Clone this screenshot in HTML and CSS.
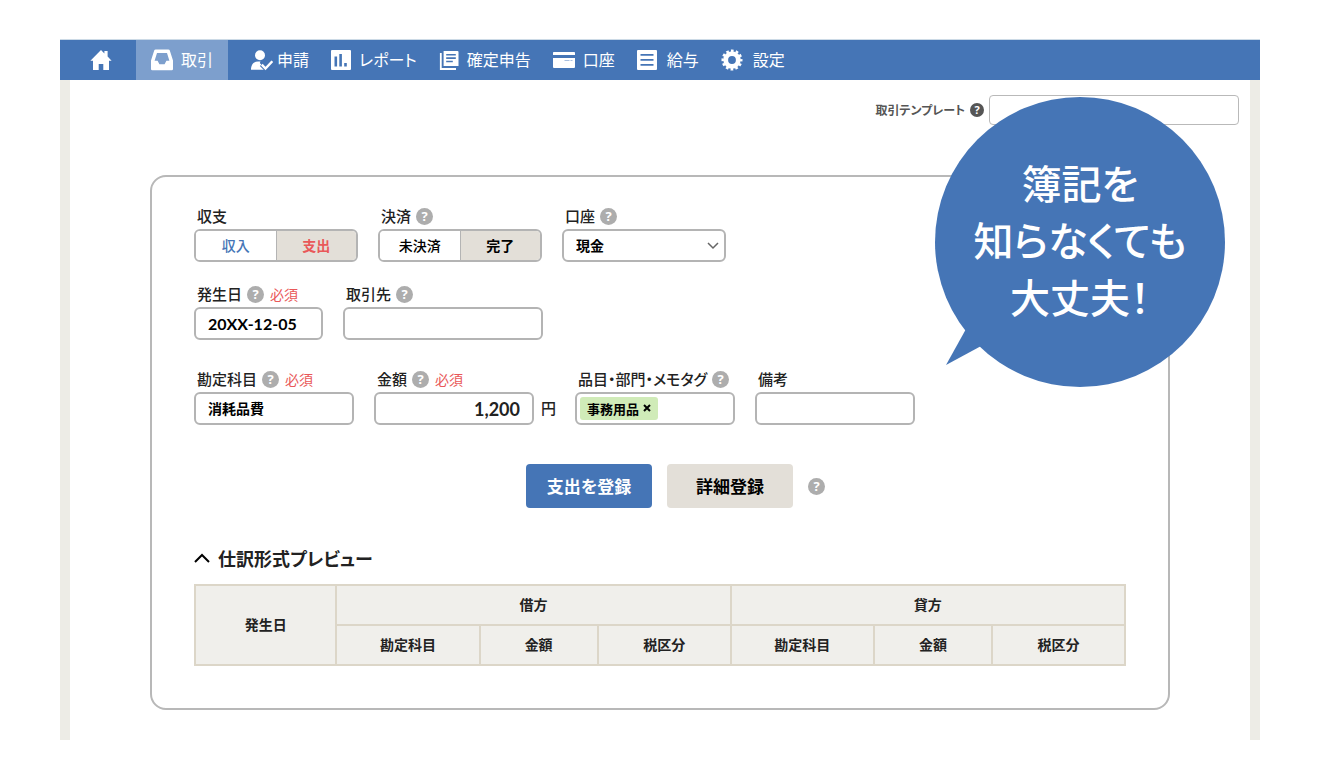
FILE: index.html
```html
<!DOCTYPE html>
<html lang="ja">
<head>
<meta charset="utf-8">
<meta name="viewport" content="width=device-width, initial-scale=1">
<title>取引の登録</title>
<link rel="stylesheet" href="styles.css">
</head>
<body>
<div class="app">
  <nav class="nav">
    <a class="nav-item nav-home" href="#" aria-label="ホーム">
      <svg class="icon" width="22" height="22" viewBox="0 0 22 22"><path d="M11 1 .4 11.700H3V21h5.700v-6h4.600v6H19v-9.300h2.600L17.600 7.500V2h-3.200v2.400z"/></svg>
    </a>
    <a class="nav-item nav-active" href="#" aria-current="page">
      <svg class="icon" width="22" height="22" viewBox="0 0 22 22"><path fill-rule="evenodd" d="M4.700.5h12.600q1.200 0 1.500 1L22 11.500V20q0 1.200-1.200 1.200H1.200Q0 21.200 0 20v-8.500l3.200-10q.3-1 1.500-1zM6 4 3.600 11.800h3l1.800 3.400h5.200l1.800-3.400h3L16 4z"/></svg>
      <span>取引</span>
    </a>
    <a class="nav-item nav-tight" href="#">
      <svg class="icon" width="22" height="22" viewBox="0 0 22 22"><circle cx="9" cy="6.200" r="5"/><path d="M0 20.800c0-5 2.500-8.300 7-8.300h2.500L8.800 14l6 6-.8.800z"/><path d="M10.500 15.500l4 4 6.700-7.200" fill="none" stroke="#4575b6" stroke-width="4.500"/><path d="M10.800 15.700l3.700 3.800 6.800-7.300" fill="none" stroke="#fff" stroke-width="2.400"/></svg>
      <span>申請</span>
    </a>
    <a class="nav-item" href="#">
      <svg class="icon" width="20" height="20" viewBox="0 0 20 20"><path fill-rule="evenodd" d="M1 0h18q1 0 1 1v18q0 1-1 1H1q-1 0-1-1V1q0-1 1-1zM3.500 6.500v10h2.600v-10zM8.300 4v12.500h2.600V4zM13.200 13v3.500h2.600V13z"/></svg>
      <span>レポート</span>
    </a>
    <a class="nav-item" href="#">
      <svg class="icon" width="20" height="20" viewBox="0 0 20 20"><path fill-rule="evenodd" d="M4.600 1H18.500q1 0 1 1v14H4.600zM7.200 4v1.600h9.600V4zM7.200 7.300v1.600h9.600V7.300zM7.200 10.700v1.600h6.600v-1.600z"/><path d="M1.800 3v16H17" fill="none" stroke="#fff" stroke-width="1.800"/></svg>
      <span>確定申告</span>
    </a>
    <a class="nav-item" href="#">
      <svg class="icon" width="22" height="20" viewBox="0 0 22 20"><path d="M.8 2h20.400q.8 0 .8.800V5H0V2.800Q0 2 .8 2zM0 8h22v9q0 1-1 1H1q-1 0-1-1z"/><path d="M11.500 10.500h8" stroke="#a8bfdf" stroke-width="1" stroke-dasharray="5 1"/></svg>
      <span>口座</span>
    </a>
    <a class="nav-item nav-wide" href="#">
      <svg class="icon" width="20" height="20" viewBox="0 0 20 20"><path fill-rule="evenodd" d="M1 0h18q1 0 1 1v18q0 1-1 1H1q-1 0-1-1V1q0-1 1-1zM3.500 4v1.800h13V4zM3.500 9v1.800h13V9zM3.500 14v1.800h13V14z"/></svg>
      <span>給与</span>
    </a>
    <a class="nav-item nav-wide" href="#">
      <svg class="icon" width="22" height="22" viewBox="0 0 22 22"><circle cx="11" cy="11" r="6.300" fill="none" stroke="#fff" stroke-width="4.800"/><circle cx="11" cy="11" r="9.300" fill="none" stroke="#fff" stroke-width="2.400" stroke-dasharray="2.700 2.169" stroke-dashoffset="1.350"/></svg>
      <span>設定</span>
    </a>
  </nav>

  <main class="main">
    <div class="template">
      <label class="template-label" for="template">取引テンプレート</label>
      <button class="help help-dark" type="button" aria-label="取引テンプレートのヘルプ">?</button>
      <input class="template-input" id="template" type="text">
    </div>

    <form class="panel">
      <div class="row">
        <div class="field field-segment">
          <div class="field-head"><span id="l-type">収支</span></div>
          <div class="segment" role="group" aria-labelledby="l-type">
            <button class="segment-item segment-income" type="button" aria-pressed="false">収入</button>
            <button class="segment-item segment-expense segment-on" type="button" aria-pressed="true">支出</button>
          </div>
        </div>
        <div class="field field-segment">
          <div class="field-head"><span id="l-settle">決済</span><button class="help" type="button" aria-label="決済のヘルプ">?</button></div>
          <div class="segment" role="group" aria-labelledby="l-settle">
            <button class="segment-item" type="button" aria-pressed="false">未決済</button>
            <button class="segment-item segment-on" type="button" aria-pressed="true">完了</button>
          </div>
        </div>
        <div class="field field-segment">
          <div class="field-head"><label for="account">口座</label><button class="help" type="button" aria-label="口座のヘルプ">?</button></div>
          <div class="select">
            <select class="control" id="account"><option>現金</option></select>
            <svg class="select-arrow" width="12" height="8" viewBox="0 0 12 8"><path d="M1 1l5 5 5-5"/></svg>
          </div>
        </div>
      </div>

      <div class="row">
        <div class="field field-date">
          <div class="field-head"><label for="date">発生日</label><button class="help" type="button" aria-label="発生日のヘルプ">?</button><span class="required">必須</span></div>
          <input class="control control-number" id="date" type="text" value="20XX-12-05">
        </div>
        <div class="field field-partner">
          <div class="field-head"><label for="partner">取引先</label><button class="help" type="button" aria-label="取引先のヘルプ">?</button></div>
          <input class="control" id="partner" type="text">
        </div>
      </div>

      <div class="row row-last">
        <div class="field">
          <div class="field-head"><label for="item">勘定科目</label><button class="help" type="button" aria-label="勘定科目のヘルプ">?</button><span class="required">必須</span></div>
          <input class="control" id="item" type="text" value="消耗品費">
        </div>
        <div class="amount">
          <div class="field">
            <div class="field-head"><label for="amount">金額</label><button class="help" type="button" aria-label="金額のヘルプ">?</button><span class="required">必須</span></div>
            <input class="control control-number control-amount" id="amount" type="text" value="1,200">
          </div>
          <span class="unit">円</span>
        </div>
        <div class="field">
          <div class="field-head"><label for="tags">品目・部門・メモタグ</label><button class="help" type="button" aria-label="品目・部門・メモタグのヘルプ">?</button></div>
          <div class="control tags">
            <button class="tag" type="button">事務用品 <svg width="8" height="8" viewBox="0 0 8 8"><path d="M1 1l6 6M7 1L1 7"/></svg></button>
            <input class="tags-input" id="tags" type="text">
          </div>
        </div>
        <div class="field">
          <div class="field-head"><label for="note">備考</label></div>
          <input class="control" id="note" type="text">
        </div>
      </div>

      <div class="actions">
        <button class="button button-primary" type="submit">支出を登録</button>
        <button class="button" type="button">詳細登録</button>
        <button class="help" type="button" aria-label="登録のヘルプ">?</button>
      </div>

      <h2 class="preview-title">
        <svg width="16" height="10" viewBox="0 0 16 10"><path d="M1 9l7-7 7 7"/></svg>
        仕訳形式プレビュー
      </h2>
      <table class="preview">
        <colgroup>
          <col class="col-date"><col class="col-item"><col class="col-amount"><col class="col-tax"><col class="col-item"><col class="col-amount"><col class="col-tax">
        </colgroup>
        <thead>
          <tr><th rowspan="2">発生日</th><th colspan="3">借方</th><th colspan="3">貸方</th></tr>
          <tr><th>勘定科目</th><th>金額</th><th>税区分</th><th>勘定科目</th><th>金額</th><th>税区分</th></tr>
        </thead>
      </table>
    </form>
  </main>

  <aside class="bubble">
    <svg class="bubble-tail" width="40" height="40" viewBox="0 0 40 40"><path d="M20 2 0 38l37-20z"/></svg>
    <p class="bubble-text">簿記を<br>知らなくても<br>大丈夫！</p>
  </aside>
</div>
</body>
</html>
```
FILE: styles.css
```css
* {
  box-sizing: border-box;
}

body {
  margin: 0;
  padding: 40px 60px;
  background: #fff;
  color: #222;
  font-family: "Noto Sans CJK JP", sans-serif;
  font-feature-settings: "palt";
  font-size: 14px;
}

button,
input,
select {
  margin: 0;
  font: inherit;
  font-feature-settings: inherit;
  color: #000;
}

.app {
  position: relative;
}

/* Navigation */
.nav {
  display: flex;
  height: 40px;
  background: #4575b6;
  box-shadow: 0 -1px 0 #ccdae6;
}

.nav-item {
  display: flex;
  align-items: center;
  gap: 8px;
  padding: 0 11px;
  color: #fff;
  font-size: 16px;
  text-decoration: none;
}

.nav-item span {
  padding-bottom: 2px;
}

.nav-home {
  padding: 0 24px 0 30px;
}

.nav-active {
  margin-right: 12px;
  padding: 0 15px;
  background: #7d9fcd;
}

.nav-tight {
  gap: 4px;
}

.nav-wide {
  gap: 10px;
}

.icon {
  flex: none;
  fill: #fff;
}

/* Page frame */
.main {
  padding: 15px 80px 30px;
  border: solid #edece6;
  border-width: 0 10px;
}

.template {
  display: flex;
  align-items: center;
  justify-content: flex-end;
  gap: 5px;
  margin: 0 -69px 50px 0;
}

.template-label {
  padding-bottom: 2px;
  color: #555;
  font-size: 12px;
  font-weight: 700;
}

.template-input {
  width: 250px;
  height: 30px;
  border: 1px solid #b9b9b9;
  border-radius: 4px;
}

.help {
  display: inline-flex;
  align-items: center;
  justify-content: center;
  flex: none;
  width: 17px;
  height: 17px;
  padding: 0;
  border: 0;
  border-radius: 50%;
  background: #adadad;
  color: #fff;
  font-family: "Open Sans", sans-serif;
  font-size: 13px;
  font-weight: 700;
  line-height: 17px;
}

.help-dark {
  width: 14px;
  height: 14px;
  background: #555;
  font-size: 11px;
  line-height: 14px;
}

/* Form panel */
.panel {
  padding: 28px 42px 42px;
  border: 2px solid #b8b8b8;
  border-radius: 16px;
}

.row {
  display: flex;
  gap: 20px;
  margin-bottom: 21px;
}

.row-last {
  margin-top: 28px;
  margin-bottom: 39px;
}

.field {
  width: 160px;
}

.field-segment {
  width: 164px;
}

.field-date {
  width: 129px;
}

.field-partner {
  width: 200px;
}

.field-head {
  display: flex;
  align-items: center;
  gap: 5px;
  height: 24px;
  padding: 0 0 2px 3px;
  font-size: 15px;
  font-weight: 500;
  white-space: nowrap;
}

.field-head > :first-child {
  padding-bottom: 2px;
}

.required {
  margin-left: 1px;
  color: #e95859;
  font-size: 14px;
  font-weight: 400;
}

.control,
.segment {
  width: 100%;
  height: 33px;
  border: 2px solid #b4b4b4;
  border-radius: 6px;
  background: #fff;
}

.control {
  display: block;
  padding: 0 12px 2px;
  font-weight: 700;
}

.control-number {
  padding-bottom: 0;
  font-family: Lato, sans-serif;
  font-size: 16px;
}

.control-amount {
  color: #222;
  font-size: 18px;
  text-align: right;
}

.segment {
  display: flex;
  overflow: hidden;
}

.segment-item {
  flex: 1;
  padding: 0 0 2px;
  border: 0;
  background: #fff;
  font-weight: 500;
}

.segment-item + .segment-item {
  border-left: 1px solid #b4b4b4;
}

.segment-item.segment-on {
  background: #e3dfd8;
  font-weight: 700;
}

.segment-income {
  color: #4575b6;
}

.segment-expense {
  color: #e95859;
}

.select {
  display: grid;
  align-items: center;
}

.select > * {
  grid-area: 1 / 1;
}

.select .control {
  appearance: none;
}

.select-arrow {
  justify-self: end;
  margin-right: 7px;
  pointer-events: none;
  fill: none;
  stroke: #666;
  stroke-width: 1.5;
}

.amount {
  display: flex;
  align-items: flex-end;
  gap: 7px;
  margin-right: -1px;
}

.unit {
  padding-bottom: 1px;
  font-size: 15px;
  font-weight: 500;
  line-height: 33px;
}

.tags {
  display: flex;
  align-items: center;
  padding: 0 3px;
}

.tag {
  display: flex;
  align-items: center;
  gap: 4px;
  height: 23px;
  padding: 0 7px 1px;
  border: 0;
  border-radius: 3px;
  background: #d0ebb8;
  font-size: 13px;
  font-weight: 700;
  white-space: nowrap;
}

.tag svg {
  fill: none;
  stroke: #000;
  stroke-width: 2;
}

.tags-input {
  flex: 1;
  min-width: 0;
  border: 0;
  background: none;
}

/* Actions */
.actions {
  display: flex;
  align-items: center;
  justify-content: center;
  gap: 15px;
  padding-left: 31px;
  margin-bottom: 37px;
}

.button {
  width: 126px;
  height: 44px;
  padding: 0 0 2px;
  border: 0;
  border-radius: 4px;
  background: #e3dfd8;
  font-size: 17px;
  font-weight: 700;
}

.button-primary {
  background: #4575b6;
  color: #fff;
}

/* Journal preview */
.preview-title {
  display: flex;
  align-items: center;
  gap: 8px;
  margin: 0 0 13px;
  font-size: 18px;
  font-weight: 700;
  line-height: 26px;
}

.preview-title svg {
  fill: none;
  stroke: #000;
  stroke-width: 2;
}

.preview {
  width: 100%;
  table-layout: fixed;
  border-collapse: collapse;
}

.preview th {
  height: 40px;
  padding: 0 0 2px;
  border: 2px solid #dcd6c8;
  background: #f0efeb;
  font-weight: 700;
  line-height: 20px;
}

.col-date {
  width: 15.2%;
}

.col-item {
  width: 15.4%;
}

.col-amount {
  width: 12.7%;
}

/* Speech bubble */
.bubble {
  position: absolute;
  top: 57px;
  right: 35px;
  display: flex;
  align-items: center;
  justify-content: center;
  width: 290px;
  height: 290px;
  padding-bottom: 6px;
  border-radius: 50%;
  background: #4575b6;
}

.bubble-tail {
  position: absolute;
  bottom: 20px;
  left: 11px;
  fill: #4575b6;
}

.bubble-text {
  margin: 0;
  color: #fff;
  font-size: 40px;
  font-weight: 500;
  line-height: 57px;
  text-align: center;
}
```
